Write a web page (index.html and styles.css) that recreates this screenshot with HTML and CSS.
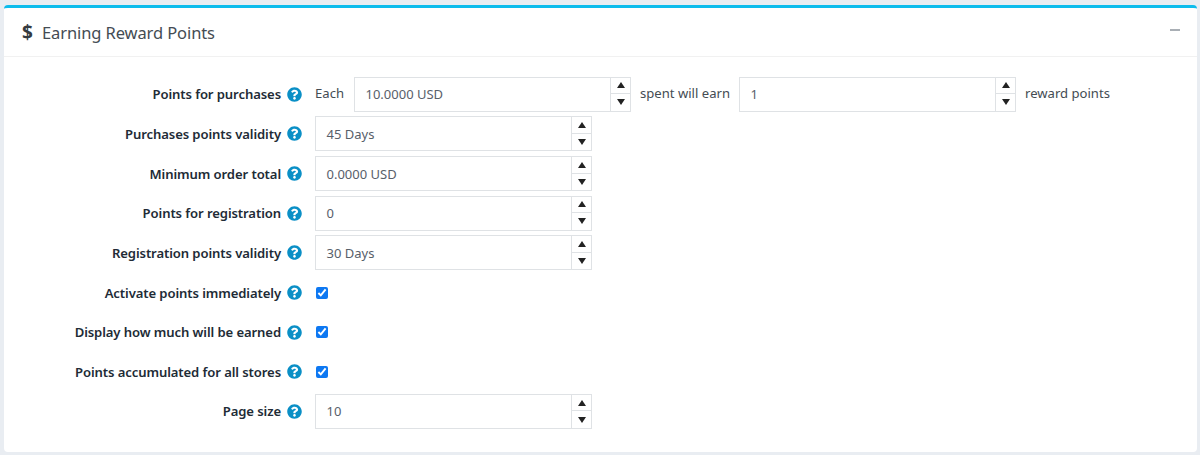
FILE: index.html
```html
<!DOCTYPE html>
<html lang="en">
<head>
<meta charset="utf-8">
<title>Earning Reward Points</title>
<link rel="stylesheet" href="styles.css">
</head>
<body>
<svg class="defs" width="0" height="0" aria-hidden="true">
  <symbol id="q" viewBox="0 0 512 512"><path d="M504 256c0 137-111 248-248 248S8 393 8 256 119 8 256 8s248 111 248 248zM262.700 90c-54.500 0-89.300 23-116.600 63.800-3.500 5.300-2.400 12.400 2.700 16.300l34.700 26.300c5.200 3.900 12.600 3 16.700-2.100 17.900-22.700 30.100-35.800 57.300-35.800 20.400 0 45.700 13.100 45.700 32.900 0 15-12.400 22.700-32.600 34-23.600 13.200-54.800 29.700-54.800 70.900V300c0 6.600 5.400 12 12 12h56c6.600 0 12-5.400 12-12v-1.300c0-28.600 83.500-29.800 83.500-107.200C379.200 133.200 318.800 90 262.700 90zM256 339c-25.500 0-46.200 20.700-46.200 46.200 0 25.500 20.700 46.200 46.200 46.200s46.200-20.700 46.200-46.200c0-25.500-20.700-46.200-46.200-46.200z"/></symbol>
</svg>
<section class="card">
  <header class="card-head">
    <h2 class="title"><span class="dollar">$</span>Earning Reward Points</h2>
    <span class="collapse"></span>
  </header>
  <div class="form">
    <div class="row">
      <div class="label">Points for purchases<svg class="help"><use href="#q"/></svg></div>
      <div class="field">
        <span class="text text-first">Each</span>
        <div class="num"><span class="val">10.0000 USD</span><div class="spin"><i class="up"></i><i class="down"></i></div></div>
        <span class="text text-mid">spent will earn</span>
        <div class="num"><span class="val">1</span><div class="spin"><i class="up"></i><i class="down"></i></div></div>
        <span class="text text-last">reward points</span>
      </div>
    </div>
    <div class="row">
      <div class="label">Purchases points validity<svg class="help"><use href="#q"/></svg></div>
      <div class="field"><div class="num"><span class="val">45 Days</span><div class="spin"><i class="up"></i><i class="down"></i></div></div></div>
    </div>
    <div class="row">
      <div class="label">Minimum order total<svg class="help"><use href="#q"/></svg></div>
      <div class="field"><div class="num"><span class="val">0.0000 USD</span><div class="spin"><i class="up"></i><i class="down"></i></div></div></div>
    </div>
    <div class="row">
      <div class="label">Points for registration<svg class="help"><use href="#q"/></svg></div>
      <div class="field"><div class="num"><span class="val">0</span><div class="spin"><i class="up"></i><i class="down"></i></div></div></div>
    </div>
    <div class="row">
      <div class="label">Registration points validity<svg class="help"><use href="#q"/></svg></div>
      <div class="field"><div class="num"><span class="val">30 Days</span><div class="spin"><i class="up"></i><i class="down"></i></div></div></div>
    </div>
    <div class="row">
      <div class="label">Activate points immediately<svg class="help"><use href="#q"/></svg></div>
      <div class="field"><input class="check" type="checkbox" checked></div>
    </div>
    <div class="row">
      <div class="label">Display how much will be earned<svg class="help"><use href="#q"/></svg></div>
      <div class="field"><input class="check" type="checkbox" checked></div>
    </div>
    <div class="row">
      <div class="label">Points accumulated for all stores<svg class="help"><use href="#q"/></svg></div>
      <div class="field"><input class="check" type="checkbox" checked></div>
    </div>
    <div class="row">
      <div class="label">Page size<svg class="help"><use href="#q"/></svg></div>
      <div class="field"><div class="num"><span class="val">10</span><div class="spin"><i class="up"></i><i class="down"></i></div></div></div>
    </div>
  </div>
</section>
</body>
</html>
```
FILE: styles.css
```css
* { box-sizing: border-box; }
html, body { height: 100%; }
body {
  margin: 0;
  padding: 5px 3px 3px 4px;
  background: #e9edf2;
  font-family: "Noto Sans", "Open Sans", sans-serif;
  color: #444;
  overflow: hidden;
}
.defs { position: absolute; }
.card {
  height: 447px;
  background: #fff;
  border-top: 3px solid #0dbcec;
  border-radius: 4px;
}
.card-head {
  height: 49px;
  padding: 0 17px 0 18px;
  display: flex;
  align-items: center;
  justify-content: space-between;
  border-bottom: 1px solid #f1f1f1;
}
.title {
  margin: 0;
  font-size: 16.500px;
  font-weight: 400;
  color: #444c53;
  display: flex;
  align-items: center;
  letter-spacing: -0.1px;
}
.dollar {
  width: 20px;
  font-weight: 700;
  font-size: 19px;
  color: #343a40;
}
.collapse {
  width: 10px;
  height: 2px;
  background: #a9afb5;
  margin-bottom: 5px;
}
.form {
  padding-top: 17.400px;
  display: grid;
  grid-auto-rows: 39.67px;
}
.row {
  display: grid;
  grid-template-columns: 298px 1fr;
  align-items: center;
}
.label {
  display: flex;
  align-items: center;
  justify-content: flex-end;
  font-size: 13.100px;
  font-weight: 600;
  color: #212b36;
  letter-spacing: -0.1px;
}
.help {
  width: 15px;
  height: 15px;
  margin-left: 6px;
  fill: #0a8fc6;
  flex: none;
}
.field {
  padding-left: 13px;
  display: flex;
  align-items: center;
}
.text {
  font-size: 13.100px;
  color: #444c53;
  margin-top: -2px;
}
.text-first { width: 39px; }
.text-mid { width: 108px; padding-left: 9px; }
.text-last { padding-left: 9px; }
.num {
  width: 277px;
  height: 35px;
  border: 1px solid #dfe2e5;
  display: flex;
  align-items: center;
  justify-content: space-between;
}
.val {
  padding-left: 10.500px;
  font-size: 13px;
  color: #58606a;
}
.spin {
  width: 20px;
  height: 100%;
  border-left: 1px solid #dfe2e5;
  display: grid;
  grid-template-rows: 1fr 1fr;
}
.spin i {
  display: flex;
  align-items: center;
  justify-content: center;
}
.spin .up { border-bottom: 1px solid #dfe2e5; }
.spin .up::before {
  content: "";
  border-left: 4px solid transparent;
  border-right: 4px solid transparent;
  border-bottom: 6px solid #222;
}
.spin .down::before {
  content: "";
  border-left: 4px solid transparent;
  border-right: 4px solid transparent;
  border-top: 6px solid #222;
}
.check {
  width: 12px;
  height: 12px;
  margin: 0 0 0 1px;
  accent-color: #0d78f2;
}
```
